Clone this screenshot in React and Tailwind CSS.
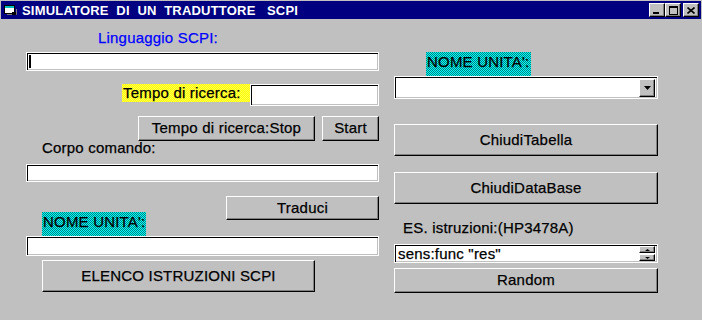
import React from 'react';

const raised =
  'bg-[#c0c0c0] border-t border-l border-t-white border-l-white border-r border-b border-r-black border-b-black shadow-[inset_-1px_-1px_0_#808080]';
const sunken =
  'bg-white border border-white shadow-[inset_1px_1px_0_#000,inset_-1px_-1px_0_#c0c0c0]';
const cyanBg =
  'bg-[repeating-conic-gradient(#00ffff_0_25%,#008080_0_50%)] bg-[length:2px_2px]';
const yellowBg =
  'bg-[repeating-conic-gradient(#ffff00_0_25%,#ffff50_0_50%)] bg-[length:2px_2px]';

const Button = ({ className = '', children }) => (
  <button className={`${raised} flex items-center justify-center text-black ${className}`}>
    {children}
  </button>
);

const TitleIcon = () => (
  <svg width="13" height="12" viewBox="0 0 13 12">
    <rect x="0.5" y="1.5" width="10" height="8" fill="#fff" stroke="#000" />
    <rect x="1" y="2" width="9" height="2" fill="#00c0c0" />
    <path d="M3 10.5h9.5V5" fill="none" stroke="#808080" />
    <rect x="8" y="8" width="4" height="3" fill="#000" />
  </svg>
);

const WinButton = ({ children, className = '' }) => (
  <div className={`${raised} w-[16px] h-[14px] flex items-center justify-center ${className}`}>
    {children}
  </div>
);

const Arrow = ({ up, w = 7, h = 4 }) => (
  <svg width={w} height={h} viewBox={`0 0 ${w} ${h}`}>
    {up ? (
      <polygon points={`0,${h} ${w},${h} ${w / 2},0`} fill="#000" />
    ) : (
      <polygon points={`0,0 ${w},0 ${w / 2},${h}`} fill="#000" />
    )}
  </svg>
);

export default function App() {
  return (
    <div className="w-[702px] h-[320px] bg-[#c0c0c0] overflow-hidden font-['Liberation_Sans',Arial,sans-serif] text-[15px] tracking-[0.2px] text-black [-webkit-text-stroke:0.25px]">
      {/* Title bar */}
      <div className="mt-[1px] mx-[1px] h-[18px] bg-[#000080] flex items-center pl-[3px] pr-[2px]">
        <TitleIcon />
        <span className="ml-[5px] text-white font-bold text-[13px] whitespace-pre leading-none [-webkit-text-stroke:0px]">
          {'SIMULATORE  DI  UN  TRADUTTORE   SCPI'}
        </span>
        <div className="ml-auto flex items-center">
          <WinButton>
            <div className="w-[6px] h-[2px] bg-black mt-[6px] mr-[2px]" />
          </WinButton>
          <WinButton>
            <div className="w-[9px] h-[9px] border border-black border-t-2" />
          </WinButton>
          <WinButton className="ml-[2px]">
            <svg width="8" height="7" viewBox="0 0 8 7">
              <path d="M0.5 0.5l7 6M7.5 0.5l-7 6" stroke="#000" strokeWidth="1.6" />
            </svg>
          </WinButton>
        </div>
      </div>

      {/* Body */}
      <div className="flex pl-[26px]">
        {/* Left column */}
        <div className="w-[353px] flex flex-col">
          <div className="mt-[10px] ml-[72px] leading-[18px] text-[#0000ff]">Linguaggio SCPI:</div>
          <div className={`${sunken} mt-[5px] h-[19px] flex items-center`}>
            <div className="ml-[2px] w-[2px] h-[13px] bg-black" />
          </div>

          <div className="mt-[13px] flex justify-end items-start">
            <div className={`${yellowBg} w-[128px] h-[18px] leading-[18px] pl-[1px]`}>Tempo di ricerca:</div>
            <div className={`${sunken} w-[129px] h-[22px]`} />
          </div>

          <div className="mt-[10px] flex justify-end gap-[7px]">
            <Button className="w-[177px] h-[25px]">Tempo di ricerca:Stop</Button>
            <Button className="w-[57px] h-[25px]">Start</Button>
          </div>

          <div className="pl-[16px] leading-[14px]">Corpo comando:</div>
          <div className={`${sunken} mt-[9px] h-[18px]`} />

          <div className="mt-[14px] flex justify-between items-start">
            <div className={`${cyanBg} ml-[16px] mt-[16px] w-[104px] h-[24px] leading-[18px] pt-[1px] pl-[1px]`}>
              NOME UNITA':
            </div>
            <Button className="w-[153px] h-[24px]">Traduci</Button>
          </div>
          <div className={`${sunken} h-[20px]`} />

          <Button className="mt-[4px] ml-[16px] w-[273px] h-[32px]">ELENCO ISTRUZIONI SCPI</Button>
        </div>

        {/* Right column */}
        <div className="ml-[15px] w-[264px] flex flex-col">
          <div className={`${cyanBg} mt-[33px] ml-[32px] w-[105px] h-[24px] leading-[18px] pt-[1px] pl-[1px]`}>
            NOME UNITA':
          </div>
          <div className={`${sunken} h-[23px] flex items-center justify-end pr-[2px]`}>
            <div className={`${raised} w-[16px] h-[18px] flex items-center justify-center`}>
              <Arrow />
            </div>
          </div>

          <Button className="mt-[25px] w-full h-[32px]">ChiudiTabella</Button>
          <Button className="mt-[16px] w-full h-[32px]">ChiudiDataBase</Button>

          <div className="mt-[15px] ml-[9px] leading-[18px]">ES. istruzioni:(HP3478A)</div>
          <div className={`${sunken} mt-[7px] h-[19px] flex items-center pl-[3px] pr-[2px]`}>
            <span className="leading-[15px]">sens:func "res"</span>
            <div className="ml-auto flex flex-col gap-[1px]">
              <div className={`${raised} w-[16px] h-[7px] flex items-center justify-center`}>
                <Arrow up w={5} h={2} />
              </div>
              <div className={`${raised} w-[16px] h-[7px] flex items-center justify-center`}>
                <Arrow w={5} h={2} />
              </div>
            </div>
          </div>
          <Button className="mt-[5px] w-full h-[25px]">Random</Button>
        </div>
      </div>
    </div>
  );
}
